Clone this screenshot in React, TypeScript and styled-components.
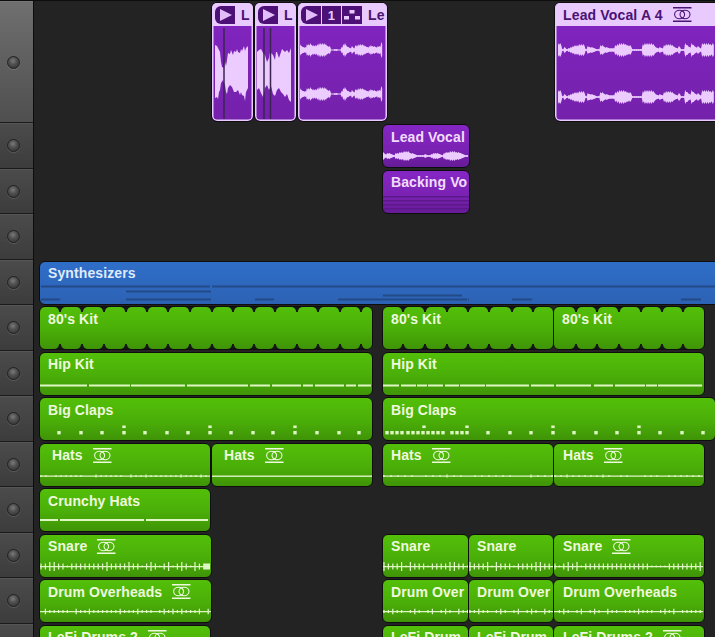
import React from "react";
import styled, {createGlobalStyle} from "styled-components";

type Tint = "green" | "purple" | "blue" | "selected";

interface ClipData {
    a: number;
    b: number;
    label?: string;
    tint: Tint;
    link?: boolean;
    indent?: number;
    linkGap?: number;
    tools?: "play" | "full";
    art?: React.ReactNode;
}

const GlobalStyle = createGlobalStyle`
  html, body {
    margin: 0;
    padding: 0;
    background: #fff;
  }
`

const Stage = styled.div`
  width: 715px;
  height: 637px;
  overflow: hidden;
  background: #0d0d0d;
  padding-top: 1px;
  box-sizing: border-box;
  font-family: "Liberation Sans", Arial, sans-serif;
`

const Track = styled.div<{ $h: number }>`
  display: flex;
  height: ${props => props.$h}px;
`

const Gutter = styled.div<{ $tall?: boolean }>`
  width: 33px;
  flex: none;
  box-sizing: border-box;
  display: flex;
  align-items: center;
  justify-content: center;
  padding-right: 7px;
  background: ${props => props.$tall
    ? "linear-gradient(#6f6f6f, #4f4f4f)"
    : "linear-gradient(#4b4b4b, #3c3c3c)"};
  border-bottom: 1px solid #1b1b1b;
  border-top: 1px solid ${props => props.$tall ? "#777" : "#555"};
`

const Led = styled.div`
  width: 13px;
  height: 13px;
  border-radius: 50%;
  box-sizing: border-box;
  border: 1px solid #222;
  background: radial-gradient(circle at 45% 35%, #7a7a7a 0, #505050 40%, #2c2c2c 100%);
  box-shadow: 0 1px 1px rgba(255, 255, 255, .14);
`

const Lane = styled.div<{ $pad: number }>`
  flex: 1;
  min-width: 0;
  display: flex;
  align-items: flex-start;
  padding-top: ${props => props.$pad}px;
  background: #232323;
  border-left: 1px solid #0d0d0d;
`

const fills: Record<Tint, string> = {
    green: "linear-gradient(#53bf09, #4aae08 55%, #3f9407)",
    purple: "linear-gradient(#8526c4, #7a22b2 60%, #651b96)",
    blue: "linear-gradient(#2f6ec9, #2c62b4)",
    selected: "linear-gradient(#8325c2, #7421ab)",
}

const inks: Record<Tint, string> = {
    green: "#eef9df",
    purple: "#f1dcff",
    blue: "#dfeaff",
    selected: "#4a1273",
}

const ClipBox = styled.div<{ $w: number; $h: number; $gap: number; $tint: Tint }>`
  position: relative;
  flex: none;
  box-sizing: border-box;
  width: ${props => props.$w}px;
  height: ${props => props.$h}px;
  margin-left: ${props => props.$gap}px;
  border: 1px solid #0e0e0e;
  border-radius: 6px;
  overflow: hidden;
  background: ${props => fills[props.$tint]};
  color: ${props => inks[props.$tint]};
  box-shadow: ${props => props.$tint === "selected" ? "inset 0 0 0 1.5px #e9caff" : "none"};
`

const Title = styled.div<{ $indent: number }>`
  display: flex;
  align-items: center;
  height: 23px;
  padding-left: ${props => props.$indent}px;
  font-size: 14px;
  font-weight: bold;
  white-space: nowrap;
  letter-spacing: .1px;
`

const Header = styled.div<{ $indent: number }>`
  display: flex;
  align-items: center;
  height: 23px;
  padding-left: ${props => props.$indent}px;
  background: #e9caff;
  font-size: 14px;
  font-weight: bold;
  white-space: nowrap;
  letter-spacing: .15px;
`

const ToolGroup = styled.div`
  display: flex;
  gap: 1px;
  margin-right: 6px;
  margin-top: 1px;
  flex: none;
`

const ToolButton = styled.div<{ $w: number; $first?: boolean }>`
  width: ${props => props.$w}px;
  height: 18px;
  display: flex;
  align-items: center;
  justify-content: center;
  background: #4c1077;
  border-radius: ${props => props.$first ? "6px 0 0 6px" : "0"};
  color: #e9caff;
  font-size: 13px;
  font-weight: bold;
`

const PlayMark = styled.div`
  width: 0;
  height: 0;
  margin-left: 1px;
  border-left: 12px solid #e3bdf9;
  border-top: 6.5px solid transparent;
  border-bottom: 6.5px solid transparent;
`

const Art = styled.svg`
  position: absolute;
  left: 0;
  top: 0;
  width: 100%;
  height: 100%;
  pointer-events: none;
`

const LinkSvg = styled.svg<{ $gap: number }>`
  flex: none;
  margin-left: ${props => props.$gap}px;
`

function LinkIcon({gap}: { gap: number }) {
    return (
        <LinkSvg $gap={gap} width="19" height="15" viewBox="0 0 19 15" fill="none" stroke="currentColor">
            <path d="M0 .75H18.5M0 14.25H18.5" strokeWidth="1.3"/>
            <ellipse cx="6.6" cy="7.5" rx="5" ry="4.2" strokeWidth="1.1"/>
            <ellipse cx="12" cy="7.5" rx="5" ry="4.2" strokeWidth="1.1"/>
        </LinkSvg>
    )
}

function PatternIcon() {
    return (
        <svg width="16" height="10" viewBox="0 0 16 10" fill="#e9caff">
            <rect x="5.5" y="0" width="5" height="3.5"/>
            <rect x="0" y="6" width="5" height="3.5"/>
            <rect x="11" y="6" width="5" height="3.5"/>
        </svg>
    )
}

const LILAC = "#ecccff"
const MINT = "#def6c4"
const BLUE_INK = "#234a86"

// digit = half height of the wave at that column, every other point pulled in a little for the jagged edge
function Wave({x, y, step = 2, levels}: { x: number; y: number; step?: number; levels: string }) {
    const values = levels.split("").flatMap(c => {
        const v = Number(c)
        return [v, v * .72]
    })
    const half = step / 2
    const top = values.map((v, i) => `${x + i * half},${y - Math.max(v, .6)}`)
    const bottom = values.map((v, i) => `${x + i * half},${y + Math.max(v, .6)}`).reverse()
    return <polygon points={[...top, ...bottom].join(" ")} fill={LILAC}/>
}

function Segments({y, parts, h = 2, color = MINT}: { y: number; parts: number[][]; h?: number; color?: string }) {
    return <>{parts.map(([a, b], i) => <rect key={i} x={a} y={y} width={b - a} height={h} fill={color}/>)}</>
}

function Dots({xs, doubles = [], upper = []}: { xs: number[]; doubles?: number[]; upper?: number[] }) {
    return (
        <g fill={MINT}>
            {xs.map(x => <rect key={x} x={x - 1.7} y={431} width={3.4} height={3.4}/>)}
            {[...doubles, ...upper].map(x => <rect key={"u" + x} x={x - 1.7} y={425.5} width={3.4} height={2.6}/>)}
        </g>
    )
}

function Ticks({from, to, y, step, amp, seed, heavy = 4}: {
    from: number; to: number; y: number; step: number; amp: number; seed: number; heavy?: number
}) {
    let n = seed
    let d = `M${from} ${y}H${to}`
    for (let x = from + 1; x < to; x += step) {
        n = (n * 137 + 59) % 251
        const size = n % 7 === 0 ? amp * .3 : n % 5 === 0 ? heavy : amp
        d += `M${x.toFixed(1)} ${y - size}V${y + size}`
    }
    return <path d={d} stroke={MINT} strokeWidth="1.25" fill="none"/>
}

function Notches({xs, top, bottom}: { xs: number[]; top: number; bottom: number }) {
    return (
        <g fill="#161616">
            {xs.map(x => (
                <React.Fragment key={x}>
                    <path d={`M${x - 6} ${top}Q${x - 1.5} ${top} ${x - .8} ${top + 5}H${x + .8}Q${x + 1.5} ${top} ${x + 6} ${top}Z`}/>
                    <path d={`M${x - 6} ${bottom}Q${x - 1.5} ${bottom} ${x - .8} ${bottom - 5}H${x + .8}Q${x + 1.5} ${bottom} ${x + 6} ${bottom}Z`}/>
                </React.Fragment>
            ))}
        </g>
    )
}

const tallWaveA = "215,45 217,46 218,48 220,52 221,62 222,67 224,68 225,62 226,66 227,60 228,53 230,54 231,50 233,55 234,51 236,52 237,49 238,52 240,53 241,49 242,51 244,46 245,51 246,48 248,46 248,88 246,92 245,101 244,96 242,95 241,92 240,95 238,90 236,92 234,92 232,87 230,85 228,88 227,94 226,92 225,85 223,80 221,83 220,90 219,92 218,99 217,97 215,98"
const tallWaveB = "257,52 259,50 261,49 263,53 265,55 267,62 269,58 270,52 271,53 273,55 275,60 276,52 277,52 279,58 281,52 282,49 283,50 285,52 287,50 289,53 291,48 291,102 289,100 287,94 285,97 283,94 281,92 279,88 277,90 275,96 273,94 271,86 269,90 267,85 265,88 263,97 261,93 259,88 257,90"
const vocalC = "643366755567777644001100367432425566654345443448"
const vocalD = "77131234556661433211553322256777655111116777763232566653241175375342777767"

const dense = [387, 392, 397, 402, 408, 413, 418, 423, 428, 433, 438, 443, 452, 457, 462, 467]

const tracks: { h: number; pad: number; tall?: boolean; clips: ClipData[] }[] = [
    {
        h: 122, pad: 1, tall: true, clips: [
            {
                a: 212, b: 253, tint: "selected", tools: "play", label: "L", art: <>
                    <polygon points={tallWaveA} fill={LILAC}/>
                    <path d="M224 28V119" stroke="#3a2450" strokeWidth="1.5"/>
                </>
            },
            {
                a: 255, b: 296, tint: "selected", tools: "play", label: "L", art: <>
                    <polygon points={tallWaveB} fill={LILAC}/>
                    <path d="M264 28V119M270.5 28V119" stroke="#3a2450" strokeWidth="1.5"/>
                </>
            },
            {
                a: 298, b: 387, tint: "selected", tools: "full", label: "Le", art: <>
                    <Wave x={300} y={50} step={1.73} levels={vocalC}/>
                    <Wave x={300} y={94} step={1.73} levels={vocalC}/>
                </>
            },
            {
                a: 555, b: 730, tint: "selected", label: "Lead Vocal A 4", link: true, indent: 8, linkGap: 10, art: <>
                    <Wave x={558} y={50} step={2.12} levels={vocalD}/>
                    <Wave x={558} y={97} step={2.12} levels={vocalD}/>
                </>
            },
        ]
    },
    {
        h: 45.5, pad: 1, clips: [{
            a: 383, b: 469, tint: "purple", label: "Lead Vocal",
            art: <Wave x={383} y={156} step={2.1} levels="42332133445553321111211233321344555443211"/>
        }]
    },
    {
        h: 45.5, pad: 1, clips: [{
            a: 383, b: 469, tint: "purple", label: "Backing Vo",
            art: <>
                <Segments y={195.5} h={1.5} color="#5c1889" parts={[[383, 469]]}/>
                <Segments y={199.5} h={1.5} color="#5c1889" parts={[[383, 469]]}/>
                <Segments y={203.5} h={1.5} color="#5c1889" parts={[[383, 469]]}/>
                <Segments y={207.5} h={1.5} color="#5c1889" parts={[[383, 469]]}/>
            </>
        }]
    },
    {h: 45.5, pad: 1, clips: []},
    {
        h: 45.5, pad: 1, clips: [{
            a: 40, b: 730, tint: "blue", label: "Synthesizers", art: <>
                <Segments y={285} h={2} color={BLUE_INK} parts={[[41, 210], [212, 730]]}/>
                <Segments y={290} h={2} color={BLUE_INK} parts={[[126, 211]]}/>
                <Segments y={294} h={2} color={BLUE_INK} parts={[[383, 462]]}/>
                <Segments y={298} h={2} color={BLUE_INK}
                          parts={[[41, 60], [126, 211], [255, 274], [338, 465], [465, 467], [468, 469], [512, 532], [681, 701]]}/>
            </>
        }]
    },
    {
        h: 45.5, pad: 1, clips: [
            {
                a: 40, b: 372, tint: "green", label: "80's Kit",
                art: <Notches xs={[60, 82, 104, 126, 147, 168, 190, 212, 233, 254, 275, 297, 318, 340, 361]} top={307} bottom={349}/>
            },
            {
                a: 383, b: 553, tint: "green", label: "80's Kit",
                art: <Notches xs={[403, 425, 447, 468, 489, 512, 533]} top={307} bottom={349}/>
            },
            {
                a: 554, b: 704, tint: "green", label: "80's Kit",
                art: <Notches xs={[576, 597, 619, 641, 662, 683]} top={307} bottom={349}/>
            },
        ]
    },
    {
        h: 45.5, pad: 1, clips: [
            {
                a: 40, b: 372, tint: "green", label: "Hip Kit",
                art: <Segments y={384} parts={[[40, 87], [89, 130], [131, 185], [187, 248], [250, 270], [272, 301], [303, 313], [315, 344], [346, 356], [358, 371]]}/>
            },
            {
                a: 383, b: 704, tint: "green", label: "Hip Kit",
                art: <Segments y={384} parts={[[383, 399], [401, 416], [417, 427], [428, 443], [445, 459], [460, 485], [486, 529], [531, 554], [556, 591], [594, 613], [615, 645], [646, 657], [658, 702]]}/>
            },
        ]
    },
    {
        h: 45.5, pad: 1, clips: [
            {
                a: 40, b: 372, tint: "green", label: "Big Claps",
                art: <Dots xs={[59, 81, 102, 124, 145, 167, 188, 210, 231, 253, 273, 295, 317, 339, 359]} doubles={[124, 210, 295]}/>
            },
            {
                a: 383, b: 715, tint: "green", label: "Big Claps",
                art: <Dots xs={[...dense, 488, 510, 531, 553, 574, 596, 617, 639, 660, 682, 703]} doubles={[553, 639]} upper={[424, 467]}/>
            },
        ]
    },
    {
        h: 45.5, pad: 1, clips: [
            {
                a: 40, b: 210, tint: "green", label: "Hats", link: true, indent: 12,
                art: <Ticks from={40} to={210} y={475.5} step={5} amp={1} heavy={1.6} seed={5}/>
            },
            {
                a: 212, b: 372, tint: "green", label: "Hats", link: true, indent: 12,
                art: <Segments y={475} h={1.4} parts={[[212, 372]]}/>
            },
            {
                a: 383, b: 553, tint: "green", label: "Hats", link: true,
                art: <Ticks from={383} to={553} y={475.5} step={7} amp={1} heavy={1.6} seed={9}/>
            },
            {
                a: 554, b: 704, tint: "green", label: "Hats", link: true, indent: 9,
                art: <Ticks from={554} to={703} y={475.5} step={6} amp={1} heavy={1.6} seed={17}/>
            },
        ]
    },
    {
        h: 45.5, pad: 1, clips: [{
            a: 40, b: 210, tint: "green", label: "Crunchy Hats",
            art: <Segments y={519} parts={[[40, 58], [60, 144], [146, 208]]}/>
        }]
    },
    {
        h: 45.5, pad: 1, clips: [
            {
                a: 40, b: 211, tint: "green", label: "Snare", link: true, art: <>
                    <Ticks from={40} to={205} y={566} step={4.4} amp={3} heavy={4.5} seed={3}/>
                    <rect x={204} y={563} width={6} height={6} fill={MINT}/>
                </>
            },
            {
                a: 383, b: 468, tint: "green", label: "Snare",
                art: <Ticks from={383} to={468} y={566} step={4.4} amp={3} heavy={4.5} seed={11}/>
            },
            {
                a: 469, b: 553, tint: "green", label: "Snare",
                art: <Ticks from={469} to={553} y={566} step={4.4} amp={3} heavy={4.5} seed={11}/>
            },
            {
                a: 554, b: 704, tint: "green", label: "Snare", link: true, indent: 9,
                art: <Ticks from={554} to={703} y={566} step={4.4} amp={3} heavy={4.5} seed={23}/>
            },
        ]
    },
    {
        h: 45.5, pad: 1, clips: [
            {
                a: 40, b: 211, tint: "green", label: "Drum Overheads", link: true,
                art: <Ticks from={40} to={211} y={611.5} step={4.4} amp={1.6} heavy={2.8} seed={7}/>
            },
            {
                a: 383, b: 468, tint: "green", label: "Drum Over",
                art: <Ticks from={383} to={468} y={611.5} step={4.4} amp={1.6} heavy={2.8} seed={31}/>
            },
            {
                a: 469, b: 553, tint: "green", label: "Drum Over",
                art: <Ticks from={469} to={553} y={611.5} step={4.4} amp={1.6} heavy={2.8} seed={31}/>
            },
            {
                a: 554, b: 704, tint: "green", label: "Drum Overheads", indent: 9,
                art: <Ticks from={554} to={703} y={611.5} step={4.4} amp={1.6} heavy={2.8} seed={41}/>
            },
        ]
    },
    {
        h: 45.5, pad: 1, clips: [
            {a: 40, b: 210, tint: "green", label: "LeFi Drums 2", link: true},
            {a: 383, b: 468, tint: "green", label: "LeFi Drum"},
            {a: 469, b: 553, tint: "green", label: "LeFi Drum"},
            {a: 554, b: 704, tint: "green", label: "LeFi Drums 2", link: true, indent: 9},
        ]
    },
]

function Clip({clip, gap, top, height}: { clip: ClipData; gap: number; top: number; height: number }) {
    const width = clip.b - clip.a + 2
    const indent = clip.indent ?? 8
    const selected = clip.tint === "selected"
    const content = (
        <>
            {clip.tools && (
                <ToolGroup>
                    <ToolButton $w={20} $first><PlayMark/></ToolButton>
                    {clip.tools === "full" && <ToolButton $w={19}>1</ToolButton>}
                    {clip.tools === "full" && <ToolButton $w={20}><PatternIcon/></ToolButton>}
                </ToolGroup>
            )}
            {clip.label}
            {clip.link && <LinkIcon gap={clip.linkGap ?? 10}/>}
        </>
    )
    return (
        <ClipBox $w={width} $h={height} $gap={gap} $tint={clip.tint}>
            {selected
                ? <Header $indent={clip.tools ? 3 : indent}>{content}</Header>
                : <Title $indent={indent}>{content}</Title>}
            {clip.art && (
                <Art viewBox={`${clip.a} ${top + 1} ${width - 2} ${height - 2}`} preserveAspectRatio="none">
                    {clip.art}
                </Art>
            )}
        </ClipBox>
    )
}

export default function App() {
    let rowTop = 1
    return (
        <Stage>
            <GlobalStyle/>
            {tracks.map((track, i) => {
                const top = rowTop + track.pad
                rowTop += track.h
                let cursor = 34
                return (
                    <Track key={i} $h={track.h}>
                        <Gutter $tall={track.tall}><Led/></Gutter>
                        <Lane $pad={track.pad}>
                            {track.clips.map((clip, j) => {
                                const gap = clip.a - 1 - cursor
                                cursor = clip.b + 1
                                return <Clip key={j} clip={clip} gap={gap} top={top} height={track.tall ? 120 : 44}/>
                            })}
                        </Lane>
                    </Track>
                )
            })}
        </Stage>
    )
}
